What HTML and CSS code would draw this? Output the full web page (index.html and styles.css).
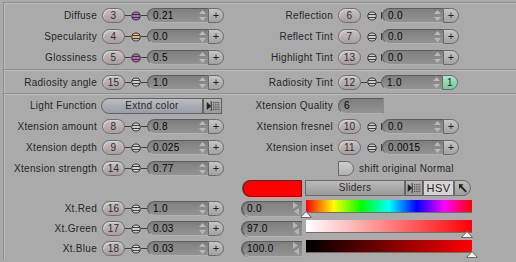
FILE: index.html
```html
<html>

<head>
    <title>Surface Editor - Advanced</title>
    <link rel="stylesheet" href="styles.css">
</head>

<body>
    <svg class="defs" width="0" height="0">
        <symbol id="spin" viewBox="0 0 9 13">
            <path d="M4.5 1 L8 5 L1 5 Z" fill="#b9b9b9" />
            <path d="M1 8 L8 8 L4.5 12 Z" fill="#b9b9b9" />
        </symbol>
        <symbol id="env" viewBox="0 0 10 10">
            <ellipse cx="5" cy="5" rx="4.2" ry="4" fill="currentColor" stroke="#3a3a3a" stroke-width="1" />
            <line x1="1" y1="3.5" x2="9" y2="3.5" stroke="#3a3a3a" stroke-width="1" />
            <line x1="1" y1="6.5" x2="9" y2="6.5" stroke="#3a3a3a" stroke-width="1" />
        </symbol>
        <symbol id="step" viewBox="0 0 8 15">
            <path d="M1 1 L6 4.5 L1 8 Z" fill="#b4b4b4" />
            <path d="M7 7 L2 10.5 L7 14 Z" fill="#b4b4b4" />
        </symbol>
        <symbol id="menu" viewBox="0 0 18 13">
            <path d="M2 2 L7 6.5 L2 11 Z" fill="#222" />
            <path d="M7 1 V12" stroke="#222" stroke-width="1" />
            <path d="M9 2h1M11 2h1M13 2h1M15 2h1M9 4h1M11 4h1M13 4h1M15 4h1M9 6h1M11 6h1M13 6h1M15 6h1M9 8h1M11 8h1M13 8h1M15 8h1M9 10h1M11 10h1M13 10h1M15 10h1" stroke="#333" stroke-width="1" transform="translate(0 0.5)" />
        </symbol>
        <symbol id="mark" viewBox="0 0 12 7">
            <path d="M6 0.5 L11.5 6.5 L0.5 6.5 Z" fill="#f2f2f2" stroke="#6a6a6a" stroke-width="1" />
        </symbol>
    </svg>

    <div class="panel">
        <div class="row">
            <div class="half">
                <span class="label">Diffuse</span>
                <span class="chan">3</span>
                <span class="conn"></span>
                <svg class="env purple"><use href="#env" /></svg>
                <span class="conn"></span>
                <span class="field">0.21<svg class="spin"><use href="#spin" /></svg></span>
                <span class="plus">+</span>
            </div>
            <div class="half">
                <span class="label">Reflection</span>
                <span class="chan">6</span>
                <span class="gap"></span>
                <svg class="env grey"><use href="#env" /></svg>
                <span class="gap-sm"></span>
                <span class="field">0.0<svg class="spin"><use href="#spin" /></svg></span>
                <span class="plus">+</span>
            </div>
        </div>
        <div class="row">
            <div class="half">
                <span class="label">Specularity</span>
                <span class="chan">4</span>
                <span class="conn"></span>
                <svg class="env orange"><use href="#env" /></svg>
                <span class="conn"></span>
                <span class="field">0.0<svg class="spin"><use href="#spin" /></svg></span>
                <span class="plus">+</span>
            </div>
            <div class="half">
                <span class="label">Reflect Tint</span>
                <span class="chan">7</span>
                <span class="gap"></span>
                <svg class="env grey"><use href="#env" /></svg>
                <span class="gap-sm"></span>
                <span class="field">0.0<svg class="spin"><use href="#spin" /></svg></span>
                <span class="plus">+</span>
            </div>
        </div>
        <div class="row">
            <div class="half">
                <span class="label">Glossiness</span>
                <span class="chan">5</span>
                <span class="conn"></span>
                <svg class="env magenta"><use href="#env" /></svg>
                <span class="conn"></span>
                <span class="field">0.5<svg class="spin"><use href="#spin" /></svg></span>
                <span class="plus">+</span>
            </div>
            <div class="half">
                <span class="label">Highlight Tint</span>
                <span class="chan">13</span>
                <span class="gap"></span>
                <svg class="env grey"><use href="#env" /></svg>
                <span class="gap-sm"></span>
                <span class="field">0.0<svg class="spin"><use href="#spin" /></svg></span>
                <span class="plus">+</span>
            </div>
        </div>

        <div class="sep"></div>

        <div class="row short">
            <div class="half">
                <span class="label">Radiosity angle</span>
                <span class="chan">15</span>
                <span class="conn"></span>
                <svg class="env grey"><use href="#env" /></svg>
                <span class="conn"></span>
                <span class="field">1.0<svg class="spin"><use href="#spin" /></svg></span>
                <span class="plus">+</span>
            </div>
            <div class="half">
                <span class="label">Radiosity Tint</span>
                <span class="chan">12</span>
                <span class="conn"></span>
                <svg class="env grey"><use href="#env" /></svg>
                <span class="conn conn-sm"></span>
                <span class="field">1.0<svg class="spin"><use href="#spin" /></svg></span>
                <span class="plus on">1</span>
            </div>
        </div>

        <div class="sep sep-sm"></div>

        <div class="row">
            <div class="half">
                <span class="label">Light Function</span>
                <span class="popup">Extnd color</span>
                <span class="menu-btn"><svg><use href="#menu" /></svg></span>
            </div>
            <div class="half">
                <span class="label">Xtension Quality</span>
                <span class="field field-int">6</span>
            </div>
        </div>
        <div class="row">
            <div class="half">
                <span class="label">Xtension amount</span>
                <span class="chan">8</span>
                <span class="conn"></span>
                <svg class="env grey"><use href="#env" /></svg>
                <span class="conn"></span>
                <span class="field">0.8<svg class="spin"><use href="#spin" /></svg></span>
                <span class="plus">+</span>
            </div>
            <div class="half">
                <span class="label">Xtension fresnel</span>
                <span class="chan">10</span>
                <span class="gap"></span>
                <svg class="env grey"><use href="#env" /></svg>
                <span class="gap-sm"></span>
                <span class="field">0.0<svg class="spin"><use href="#spin" /></svg></span>
                <span class="plus">+</span>
            </div>
        </div>
        <div class="row">
            <div class="half">
                <span class="label">Xtension depth</span>
                <span class="chan">9</span>
                <span class="conn"></span>
                <svg class="env grey"><use href="#env" /></svg>
                <span class="conn"></span>
                <span class="field">0.025<svg class="spin"><use href="#spin" /></svg></span>
                <span class="plus">+</span>
            </div>
            <div class="half">
                <span class="label">Xtension inset</span>
                <span class="chan">11</span>
                <span class="gap"></span>
                <svg class="env grey"><use href="#env" /></svg>
                <span class="gap-sm"></span>
                <span class="field">0.0015<svg class="spin"><use href="#spin" /></svg></span>
                <span class="plus">+</span>
            </div>
        </div>
        <div class="row short">
            <div class="half">
                <span class="label">Xtension strength</span>
                <span class="chan">14</span>
                <span class="conn"></span>
                <svg class="env grey"><use href="#env" /></svg>
                <span class="conn"></span>
                <span class="field">0.77<svg class="spin"><use href="#spin" /></svg></span>
                <span class="plus">+</span>
            </div>
            <div class="half">
                <span class="label"></span>
                <span class="check"></span>
                <span class="check-text">shift original Normal</span>
            </div>
        </div>

        <div class="row short">
            <div class="half"></div>
            <div class="half color-head">
                <span class="swatch"></span>
                <span class="btn sliders">Sliders</span>
                <span class="menu-btn menu-sm"><svg><use href="#menu" /></svg></span>
                <span class="btn hsv">HSV</span>
                <span class="pick">
                    <svg viewBox="0 0 14 13"><path d="M3 2 L3 7 L4.6 5.4 L9.5 10.5 L10.8 9.2 L5.9 4.1 L7.6 2.5 Z" fill="#222" /></svg>
                </span>
            </div>
        </div>

        <div class="row xt">
            <div class="half">
                <span class="label">Xt.Red</span>
                <span class="chan">16</span>
                <span class="conn"></span>
                <svg class="env grey"><use href="#env" /></svg>
                <span class="conn"></span>
                <span class="field">1.0<svg class="spin"><use href="#spin" /></svg></span>
                <span class="plus">+</span>
            </div>
            <div class="half color-row">
                <span class="field cfield">0.0<svg class="step"><use href="#step" /></svg></span>
                <span class="bar-wrap">
                    <span class="bar hue"></span>
                    <svg class="mark" style="left: -6px"><use href="#mark" /></svg>
                </span>
            </div>
        </div>
        <div class="row xt xt-sm">
            <div class="half">
                <span class="label">Xt.Green</span>
                <span class="chan">17</span>
                <span class="conn"></span>
                <svg class="env grey"><use href="#env" /></svg>
                <span class="conn"></span>
                <span class="field">0.03<svg class="spin"><use href="#spin" /></svg></span>
                <span class="plus">+</span>
            </div>
            <div class="half color-row">
                <span class="field cfield">97.0<svg class="step"><use href="#step" /></svg></span>
                <span class="bar-wrap">
                    <span class="bar sat"></span>
                    <svg class="mark" style="left: 155px"><use href="#mark" /></svg>
                </span>
            </div>
        </div>
        <div class="row xt">
            <div class="half">
                <span class="label">Xt.Blue</span>
                <span class="chan">18</span>
                <span class="conn"></span>
                <svg class="env grey"><use href="#env" /></svg>
                <span class="conn"></span>
                <span class="field">0.03<svg class="spin"><use href="#spin" /></svg></span>
                <span class="plus">+</span>
            </div>
            <div class="half color-row">
                <span class="field cfield">100.0<svg class="step"><use href="#step" /></svg></span>
                <span class="bar-wrap">
                    <span class="bar val"></span>
                    <svg class="mark" style="left: 160px"><use href="#mark" /></svg>
                </span>
            </div>
        </div>
    </div>
</body>

</html>
```

FILE: styles.css
```css
body {
    margin: 0;
    background-color: #aaaaaa;
    font-family: "Liberation Sans", Arial, sans-serif;
    font-size: 10px;
    letter-spacing: 0.3px;
    color: #262626;
    overflow: hidden;
}

.defs
{
    position: absolute;
}

.panel
{
    margin: 2px 0 0 3px;
    padding-top: 2px;
    border-top: 1px solid #8e8e8e;
    border-left: 1px solid #8e8e8e;
    box-shadow: inset 1px 1px 0 #bcbcbc;
}

.row
{
    display: flex;
    height: 21px;
    align-items: center;
}

.row.short
{
    height: 20px;
}

.row.xt-sm
{
    height: 19px;
}

.sep
{
    height: 1px;
    margin: 1px 0;
    background-color: #8e8e8e;
    border-bottom: 1px solid #bcbcbc;
}

.sep-sm
{
    margin-bottom: 0;
}

.half
{
    display: flex;
    align-items: center;
    width: 236px;
    flex-shrink: 0;
}

.half + .half
{
    width: 276px;
}

.label
{
    width: 93px;
    margin-right: 5px;
    text-align: right;
    white-space: nowrap;
}

/* channel pill */
.chan
{
    box-sizing: border-box;
    width: 23px;
    height: 15px;
    border-radius: 8px;
    border: 1px solid #6c6c6c;
    background: linear-gradient(#c9c1c3, #a89d9f);
    box-shadow: inset 1px 1px 0 #d8d2d3;
    color: #2e2e2e;
    text-align: center;
    line-height: 13px;
}

.conn
{
    width: 6px;
    height: 1px;
    background-color: #404040;
}

.conn-sm
{
    width: 4px;
}

.gap
{
    width: 6px;
}

.gap-sm
{
    width: 4px;
    align-self: stretch;
    margin: 4px 0;
    border-right: 1px solid #3a3a3a;
}

.env
{
    width: 10px;
    height: 10px;
}

.purple { color: #a866c8; }
.orange { color: #e8b870; }
.magenta { color: #d25ac8; }
.grey { color: #cfcfcf; }

.field
{
    box-sizing: border-box;
    width: 61px;
    height: 15px;
    padding-left: 5px;
    border: 1px solid #5c5c5c;
    border-right: none;
    border-bottom-color: #b2b2b2;
    border-radius: 8px 0 0 8px;
    background: linear-gradient(#7f7f7f, #939393);
    color: #050505;
    display: flex;
    align-items: center;
    justify-content: space-between;
}

.spin
{
    width: 9px;
    height: 13px;
    margin-right: 1px;
}

.plus
{
    box-sizing: border-box;
    width: 16px;
    height: 15px;
    border: 1px solid #6a6a6a;
    border-radius: 0 8px 8px 0;
    background: linear-gradient(#c6c6c6, #a2a2a2);
    text-align: center;
    line-height: 13px;
    font-size: 11px;
    color: #222;
}

.plus.on
{
    background: linear-gradient(#a6e8c4, #78c89e);
    font-size: 10px;
}

.popup
{
    box-sizing: border-box;
    width: 102px;
    height: 16px;
    margin-left: -1px;
    border: 1px solid #626468;
    border-radius: 8px 0 0 8px;
    background: linear-gradient(#b9bcc2, #989ca4);
    text-align: center;
    line-height: 14px;
    color: #2a2a2a;
}

.menu-btn
{
    box-sizing: border-box;
    width: 19px;
    height: 16px;
    border: 1px solid #626262;
    background: linear-gradient(#b4b4b4, #9a9a9a);
    display: flex;
    align-items: center;
    justify-content: center;
}

.menu-btn svg
{
    width: 16px;
    height: 12px;
}

.field-int
{
    width: 46px;
    height: 16px;
    border-right: 1px solid #8a8a8a;
}

.check
{
    box-sizing: border-box;
    width: 16px;
    height: 15px;
    border: 1px solid #6a6a6a;
    border-radius: 0 8px 8px 0;
    background: linear-gradient(#cfcfcf, #b0b0b0);
}

.check-text
{
    margin-left: 5px;
}

/* colour picker */
.color-head
{
    padding-left: 3px;
}

.swatch
{
    box-sizing: border-box;
    width: 59px;
    height: 17px;
    border: 1px solid #a40000;
    border-radius: 8px 0 0 8px;
    background-color: #ff0000;
    box-shadow: -1px 0 0 #555;
}

.btn
{
    box-sizing: border-box;
    height: 16px;
    border: 1px solid #6a6a6a;
    text-align: center;
    line-height: 14px;
}

.sliders
{
    width: 100px;
    margin-left: 3px;
    background: linear-gradient(#bababa, #9a9a9a);
    color: #2a2a2a;
}

.menu-sm
{
    width: 18px;
}

.hsv
{
    width: 31px;
    background-color: #d8d4d4;
    font-size: 11px;
    letter-spacing: 0.5px;
}

.pick
{
    box-sizing: border-box;
    width: 17px;
    height: 16px;
    border: 1px solid #6a6a6a;
    border-radius: 0 8px 8px 0;
    background: linear-gradient(#bcbcbc, #9e9e9e);
    display: flex;
    align-items: center;
    justify-content: center;
}

.pick svg
{
    width: 14px;
    height: 13px;
}

.color-row
{
    padding-left: 2px;
}

.cfield
{
    width: 60px;
    height: 16px;
    padding-left: 4px;
    box-shadow: -1px 0 0 #555;
}

.step
{
    width: 8px;
    height: 15px;
    margin-right: 2px;
}

.bar-wrap
{
    position: relative;
    align-self: flex-start;
    margin: 1px 0 0 4px;
    width: 166px;
    height: 18px;
}

.bar
{
    display: block;
    height: 12px;
    border-bottom: 1px solid #6e6e6e;
}

.hue
{
    background: linear-gradient(to right, #ff0000, #ffff00 16.6%, #00ff00 33.3%, #00ffff 50%, #0000ff 66.6%, #ff00ff 83.3%, #ff0000);
}

.sat
{
    background: linear-gradient(to right, #ffffff, #ff0000);
}

.val
{
    background: linear-gradient(to right, #000000, #ff0000);
}

.mark
{
    position: absolute;
    top: 11px;
    width: 12px;
    height: 7px;
}
```
